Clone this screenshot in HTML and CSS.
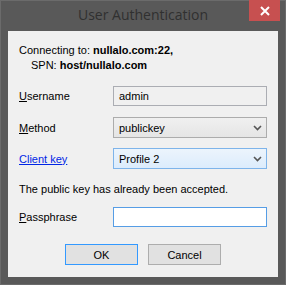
FILE: index.html
```html
<!DOCTYPE html>
<html lang="en">
<head>
    <meta charset="UTF-8">
    <title>User Authentication</title>
    <link rel="stylesheet" href="styles.css">
</head>
<body>

    <div class="window">
        <div class="titlebar">
            <span class="title">User Authentication</span>
            <button class="close-btn" aria-label="Close">
                <svg width="10" height="10" viewBox="0 0 10 10">
                    <path d="M1 1 L9 9 M9 1 L1 9" stroke="#fff" stroke-width="2" fill="none"/>
                </svg>
            </button>
        </div>

        <div class="client">
            <div class="info">
                <div>Connecting to: <b>nullalo.com:22,</b></div>
                <div class="spn">SPN: <b>host/nullalo.com</b></div>
            </div>

            <div class="form form-top">
                <label class="row-user"><u>U</u>sername</label>
                <div class="field readonly row-user">admin</div>

                <label class="row-method"><u>M</u>ethod</label>
                <div class="field select row-method">
                    <span>publickey</span>
                    <svg class="chevron" width="9" height="6" viewBox="0 0 9 6">
                        <path d="M1 1 L4.5 4.5 L8 1" stroke="#555" stroke-width="1.6" fill="none"/>
                    </svg>
                </div>

                <a class="link row-key" href="#">Client key</a>
                <div class="field select active row-key">
                    <span>Profile 2</span>
                    <svg class="chevron" width="9" height="6" viewBox="0 0 9 6">
                        <path d="M1 1 L4.5 4.5 L8 1" stroke="#555" stroke-width="1.6" fill="none"/>
                    </svg>
                </div>
            </div>

            <p class="note">The public key has already been accepted.</p>

            <div class="form">
                <label><u>P</u>assphrase</label>
                <div class="field focus"></div>
            </div>

            <div class="buttons">
                <button class="btn default">OK</button>
                <button class="btn">Cancel</button>
            </div>
        </div>
    </div>

</body>
</html>
```

FILE: styles.css
```css
/* --- BASE --- */
body {
    margin: 0;
    padding: 0;
    background-color: #5a5a5a;
    font-family: 'Liberation Sans', sans-serif;
}

/* --- WINDOW FRAME --- */
.window {
    width: 284px;
    height: 283px;
    border: 1px solid #6b6b6b;
    background-color: #595959;
    display: flex;
    flex-direction: column;
}

.titlebar {
    height: 30px;
    position: relative;
    display: flex;
    justify-content: center;
    align-items: center;
}

.title {
    font-family: 'Open Sans', sans-serif;
    font-size: 14px;
    color: #303030;
    margin-top: -3px;
}

.close-btn {
    position: absolute;
    top: -1px;
    right: 5px;
    width: 31px;
    height: 21px;
    border: none;
    padding: 0;
    background-color: #c75050;
    display: flex;
    justify-content: center;
    align-items: center;
}

/* --- CLIENT AREA --- */
.client {
    margin: 0 7px;
    height: 246px;
    background-color: #f0f0f0;
    padding: 12px 11px 0 11px;
    box-sizing: border-box;
    font-size: 11px;
    color: #000;
}

.info {
    line-height: 15px;
}

.info .spn {
    padding-left: 12px;
}

.form {
    display: grid;
    grid-template-columns: 94px 154px;
    align-items: center;
}

.form-top {
    margin-top: 13px;
}

.link {
    color: #0026e6;
    text-decoration: underline;
}

.field {
    box-sizing: border-box;
    height: 20px;
    border: 1px solid #abadb3;
    background-color: #fff;
    padding: 0 5px;
    display: flex;
    align-items: center;
}

.readonly {
    background-color: #f0f0f0;
}

.select {
    height: 21px;
    justify-content: space-between;
    border-color: #acacac;
    background: linear-gradient(#f0f0f0, #e5e5e5);
    padding: 0 4px 0 5px;
}

.row-method {
    margin-top: 11px;
}

.row-key {
    margin-top: 10px;
}

.select.active {
    border-color: #7eb4ea;
    background: linear-gradient(#ecf4fc, #dcecfc);
}

.focus {
    border-color: #569de5;
}

.note {
    margin: 14px 0 11px 0;
    line-height: 13px;
}

/* --- BUTTONS --- */
.buttons {
    display: flex;
    justify-content: center;
    gap: 10px;
    margin-top: 17px;
}

.btn {
    width: 73px;
    height: 21px;
    font-family: inherit;
    font-size: 11px;
    background-color: #e1e1e1;
    border: 1px solid #adadad;
    padding: 0;
    color: #000;
}

.btn.default {
    border-color: #3399ff;
}
```
